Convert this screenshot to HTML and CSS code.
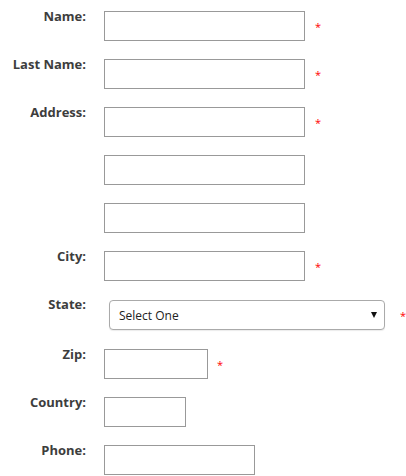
FILE: index.html
```html
<!DOCTYPE html>
<html lang="en">
<head>
  <meta charset="UTF-8">
  <meta name="viewport" content="width=device-width, initial-scale=1.0">
  <title>Address Form</title>
  <link rel="stylesheet" href="styles.css">
</head>
<body>
  <form class="address-form">
    <div class="row">
      <label for="name">Name:</label>
      <div class="field">
        <input type="text" id="name" class="text-input">
        <span class="required">*</span>
      </div>
    </div>
    <div class="row">
      <label for="lastName">Last Name:</label>
      <div class="field">
        <input type="text" id="lastName" class="text-input">
        <span class="required">*</span>
      </div>
    </div>
    <div class="row">
      <label for="address1">Address:</label>
      <div class="field">
        <input type="text" id="address1" class="text-input">
        <span class="required">*</span>
      </div>
    </div>
    <div class="row">
      <label></label>
      <div class="field">
        <input type="text" id="address2" class="text-input">
      </div>
    </div>
    <div class="row">
      <label></label>
      <div class="field">
        <input type="text" id="address3" class="text-input">
      </div>
    </div>
    <div class="row">
      <label for="city">City:</label>
      <div class="field">
        <input type="text" id="city" class="text-input">
        <span class="required">*</span>
      </div>
    </div>
    <div class="row row-state">
      <label for="state">State:</label>
      <div class="field">
        <div class="select-wrap">
          <select id="state" class="select-input">
            <option>Select One</option>
          </select>
          <span class="select-arrow"></span>
        </div>
        <span class="required required-state">*</span>
      </div>
    </div>
    <div class="row">
      <label for="zip">Zip:</label>
      <div class="field">
        <input type="text" id="zip" class="text-input input-zip">
        <span class="required required-zip">*</span>
      </div>
    </div>
    <div class="row">
      <label for="country">Country:</label>
      <div class="field">
        <input type="text" id="country" class="text-input input-country">
      </div>
    </div>
    <div class="row">
      <label for="phone">Phone:</label>
      <div class="field">
        <input type="text" id="phone" class="text-input input-phone">
      </div>
    </div>
  </form>
</body>
</html>
```

FILE: styles.css
```css
body {
  font-family: "Open Sans", Arial, sans-serif;
  background-color: white;
  margin: 0;
  padding: 0;
}

.address-form {
  padding-top: 8px;
}

.row {
  display: grid;
  grid-template-columns: 86px 1fr;
  column-gap: 18px;
  margin-bottom: 15px;
}

.row label {
  text-align: right;
  font-size: 13px;
  font-weight: bold;
  line-height: 16px;
  color: #3d3d3d;
}

.field {
  display: flex;
  align-items: center;
  margin-top: 3px;
}

.text-input {
  box-sizing: border-box;
  width: 201px;
  height: 30px;
  border: 1px solid #999;
  margin: 0;
  padding: 0 6px;
  font-family: inherit;
  font-size: 12px;
}

.input-zip {
  width: 104px;
}

.input-country {
  width: 82px;
}

.input-phone {
  width: 151px;
}

.required {
  color: #f00;
  font-size: 11px;
  line-height: 11px;
  margin-left: 10px;
  padding-top: 0;
}

.required-zip {
  margin-left: 9px;
}

.row-state {
  margin-bottom: 16px;
}

.row-state .field {
  margin-top: 4px;
}

.select-wrap {
  position: relative;
  margin-left: 5px;
}

.select-input {
  appearance: none;
  box-sizing: border-box;
  width: 276px;
  height: 30px;
  border: 1px solid #aaa;
  border-radius: 4px;
  background: white;
  box-shadow: 0 1px 1px rgba(0, 0, 0, 0.08);
  padding: 0 0 0 9px;
  font-family: inherit;
  font-size: 12px;
  color: #222;
}

.select-arrow {
  position: absolute;
  top: 12px;
  right: 8px;
  width: 0;
  height: 0;
  border-left: 3px solid transparent;
  border-right: 3px solid transparent;
  border-top: 6px solid #111;
}

.required-state {
  margin-left: 15px;
}
```
